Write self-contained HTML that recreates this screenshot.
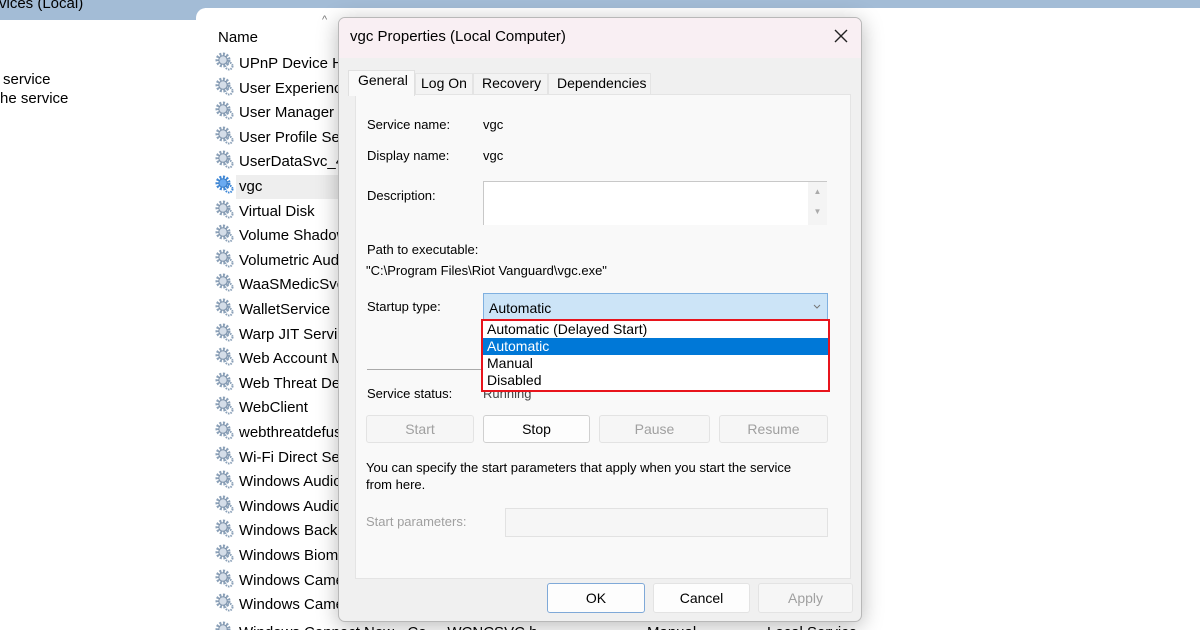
<!DOCTYPE html>
<html><head><style>
*{margin:0;padding:0;box-sizing:border-box}
html,body{width:1200px;height:630px;overflow:hidden}
body{background:#fff;font-family:"Liberation Sans",sans-serif;position:relative;color:#000}
.a{position:absolute;white-space:nowrap}
.row{position:absolute;left:215px;font-size:15px;height:24px;line-height:24px}
.ic{display:inline-block;width:20px;height:20px;vertical-align:-4px;margin-right:4px}
.lbl{font-size:13px;position:absolute;white-space:nowrap}
.btn{position:absolute;height:28px;border:1px solid #e3e3e3;background:#f6f6f6;color:#a0a0a0;font-size:14px;text-align:center;line-height:26px;border-radius:3px}
</style></head><body>
<div class="a" style="left:0;top:0;width:1200px;height:8px;background:#a3bcd6"></div>
<div class="a" style="left:0;top:0;width:205px;height:20px;background:#a3bcd6"></div>
<div class="a" style="left:196px;top:8px;width:20px;height:14px;background:#fff;border-top-left-radius:10px"></div>
<div class="a" style="left:-6px;top:-5px;font-size:15px">rvices (Local)</div>
<div class="a" style="left:3px;top:71px;font-size:15px">service</div>
<div class="a" style="left:0;top:90px;font-size:15px">he service</div>
<div class="a" style="left:218px;top:29px;font-size:15px">Name</div>
<div class="a" style="left:322px;top:14px;font-size:11px;color:#777">^</div>
<svg width="0" height="0" style="position:absolute"><defs>
<g id="g"><circle cx="8" cy="8" r="6" fill="none" stroke="#8aa0b8" stroke-width="3" stroke-dasharray="2 1.5"/><circle cx="8" cy="8" r="4.2" fill="#d4dde8" stroke="#7b90a8"/><circle cx="14" cy="14" r="3.5" fill="none" stroke="#8aa0b8" stroke-width="2" stroke-dasharray="1.5 1"/></g>
<g id="gb"><circle cx="8" cy="8" r="6" fill="none" stroke="#3d86d6" stroke-width="3" stroke-dasharray="2 1.5"/><circle cx="8" cy="8" r="4.2" fill="#6aaaf0" stroke="#3a7cc4"/><circle cx="14" cy="14" r="3.5" fill="none" stroke="#3d86d6" stroke-width="2" stroke-dasharray="1.5 1"/></g>
</defs></svg>
<div class="a" style="left:236px;top:175px;width:110px;height:24px;background:#eeeeee"></div>
<div class="row" style="top:52px"><svg class="ic"><use href="#g"/></svg>UPnP Device Host</div>
<div class="row" style="top:77px"><svg class="ic"><use href="#g"/></svg>User Experience</div>
<div class="row" style="top:101px"><svg class="ic"><use href="#g"/></svg>User Manager</div>
<div class="row" style="top:126px"><svg class="ic"><use href="#g"/></svg>User Profile Service</div>
<div class="row" style="top:150px"><svg class="ic"><use href="#g"/></svg>UserDataSvc_42</div>
<div class="row" style="top:175px"><svg class="ic"><use href="#gb"/></svg>vgc</div>
<div class="row" style="top:200px"><svg class="ic"><use href="#g"/></svg>Virtual Disk</div>
<div class="row" style="top:224px"><svg class="ic"><use href="#g"/></svg>Volume Shadow</div>
<div class="row" style="top:249px"><svg class="ic"><use href="#g"/></svg>Volumetric Audio</div>
<div class="row" style="top:273px"><svg class="ic"><use href="#g"/></svg>WaaSMedicSvc</div>
<div class="row" style="top:298px"><svg class="ic"><use href="#g"/></svg>WalletService</div>
<div class="row" style="top:323px"><svg class="ic"><use href="#g"/></svg>Warp JIT Service</div>
<div class="row" style="top:347px"><svg class="ic"><use href="#g"/></svg>Web Account M</div>
<div class="row" style="top:372px"><svg class="ic"><use href="#g"/></svg>Web Threat Def</div>
<div class="row" style="top:396px"><svg class="ic"><use href="#g"/></svg>WebClient</div>
<div class="row" style="top:421px"><svg class="ic"><use href="#g"/></svg>webthreatdefusr</div>
<div class="row" style="top:446px"><svg class="ic"><use href="#g"/></svg>Wi-Fi Direct Ser</div>
<div class="row" style="top:470px"><svg class="ic"><use href="#g"/></svg>Windows Audio</div>
<div class="row" style="top:495px"><svg class="ic"><use href="#g"/></svg>Windows Audio</div>
<div class="row" style="top:519px"><svg class="ic"><use href="#g"/></svg>Windows Backup</div>
<div class="row" style="top:544px"><svg class="ic"><use href="#g"/></svg>Windows Biom</div>
<div class="row" style="top:569px"><svg class="ic"><use href="#g"/></svg>Windows Came</div>
<div class="row" style="top:593px"><svg class="ic"><use href="#g"/></svg>Windows Came</div>
<div class="row" style="top:621px"><svg class="ic"><use href="#g"/></svg>Windows Connect Now - Co&nbsp;&nbsp;&nbsp;&nbsp;&nbsp;WCNCSVC.h</div>
<div class="a" style="left:647px;top:621px;font-size:15px;line-height:24px">Manual</div>
<div class="a" style="left:767px;top:621px;font-size:15px;line-height:24px">Local Service</div>

<div class="a" style="left:338px;top:17px;width:524px;height:605px;background:#f0f0f0;border:1px solid #b8b8b8;border-radius:7px;box-shadow:0 4px 22px rgba(0,0,0,.28);overflow:hidden">
 <div class="a" style="left:0;top:0;width:524px;height:40px;background:#f9eff3"></div>
 <div class="a" style="left:11px;top:10px;font-size:15px">vgc Properties (Local Computer)</div>
 <svg class="a" style="left:494px;top:10px" width="16" height="16"><path d="M2 2L14 14M14 2L2 14" stroke="#222" stroke-width="1.4"/></svg>
 <div class="a" style="left:16px;top:76px;width:496px;height:485px;background:#f9f9f9;border:1px solid #e4e4e4"></div>
 <div class="a" style="left:9px;top:52px;width:67px;height:26px;background:#f9f9f9;border:1px solid #e0e0e0;border-bottom:none"></div>
 <div class="a" style="left:19px;top:54px;font-size:14px">General</div>
 <div class="a" style="left:76px;top:55px;width:58px;height:22px;background:#f3f3f3;border:1px solid #e4e4e4"></div>
 <div class="a" style="left:82px;top:57px;font-size:14px">Log On</div>
 <div class="a" style="left:134px;top:55px;width:75px;height:22px;background:#f3f3f3;border:1px solid #e4e4e4"></div>
 <div class="a" style="left:143px;top:57px;font-size:14px">Recovery</div>
 <div class="a" style="left:209px;top:55px;width:103px;height:22px;background:#f3f3f3;border:1px solid #e4e4e4"></div>
 <div class="a" style="left:218px;top:57px;font-size:14px">Dependencies</div>
 <div class="lbl" style="left:28px;top:99px">Service name:</div><div class="lbl" style="left:144px;top:99px">vgc</div>
 <div class="lbl" style="left:28px;top:130px">Display name:</div><div class="lbl" style="left:144px;top:130px">vgc</div>
 <div class="lbl" style="left:28px;top:170px">Description:</div>
 <div class="a" style="left:144px;top:163px;width:344px;height:44px;background:#fff;border:1px solid #c8c8c8;border-right:none;border-bottom:none"></div>
 <div class="a" style="left:469px;top:164px;width:19px;height:43px;background:#f4f4f4;color:#aaa;font-size:8px;text-align:center;line-height:20px">▲<br>▼</div>
 <div class="lbl" style="left:28px;top:224px">Path to executable:</div>
 <div class="lbl" style="left:27px;top:245px">"C:\Program Files\Riot Vanguard\vgc.exe"</div>
 <div class="lbl" style="left:28px;top:281px">Startup type:</div>
 <div class="a" style="left:144px;top:275px;width:345px;height:27px;background:#cce4f7;border:1px solid #7fb0e0"></div>
 <div class="lbl" style="left:150px;top:282px;font-size:14px">Automatic</div>
 <svg class="a" style="left:474px;top:286px" width="8" height="6"><path d="M1 1L4 4L7 1" stroke="#777" fill="none"/></svg>
 <div class="a" style="left:28px;top:351px;width:115px;height:1px;background:#aaa"></div>
 <div class="lbl" style="left:28px;top:368px">Service status:</div>
 <div class="lbl" style="left:144px;top:368px;color:#444">Running</div>
 <div class="a" style="left:142px;top:301px;width:349px;height:73px;background:#fff;border:2px solid #e8141c"></div>
 <div class="a" style="left:144px;top:320px;width:345px;height:17px;background:#0078d7"></div>
 <div class="a" style="left:148px;top:303px;font-size:14px;line-height:17px">Automatic (Delayed Start)<br><span style="color:#fff">Automatic</span><br>Manual<br>Disabled</div>
</div>
<div class="btn" style="left:366px;top:415px;width:108px">Start</div>
<div class="btn" style="left:483px;top:415px;width:107px;background:#fdfdfd;color:#000;border-color:#d0d0d0">Stop</div>
<div class="btn" style="left:599px;top:415px;width:111px">Pause</div>
<div class="btn" style="left:719px;top:415px;width:109px">Resume</div>
<div class="a" style="left:366px;top:459px;font-size:13px;line-height:17px;white-space:normal;width:440px">You can specify the start parameters that apply when you start the service from here.</div>
<div class="a" style="left:366px;top:514px;font-size:13px;color:#a0a0a0">Start parameters:</div>
<div class="a" style="left:505px;top:508px;width:323px;height:29px;background:#f6f6f6;border:1px solid #e2e2e2"></div>
<div class="btn" style="left:547px;top:583px;width:98px;height:30px;line-height:28px;background:#fdfdfd;color:#000;border-color:#7fa9d8">OK</div>
<div class="btn" style="left:653px;top:583px;width:97px;height:30px;line-height:28px;background:#fdfdfd;color:#000">Cancel</div>
<div class="btn" style="left:758px;top:583px;width:95px;height:30px;line-height:28px">Apply</div>
</body></html>
